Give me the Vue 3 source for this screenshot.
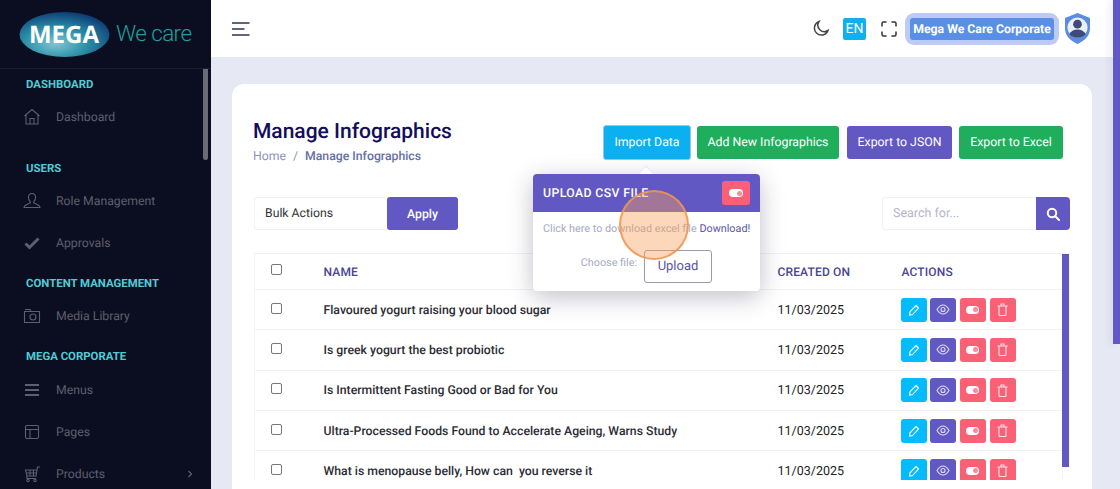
<script setup>
const nav = [
  { title: 'DASHBOARD', cls: 'sec-a', items: [{ t: 'Dashboard', i: 'home' }] },
  { title: 'USERS', cls: 'sec-b', items: [{ t: 'Role Management', i: 'user' }, { t: 'Approvals', i: 'check' }] },
  { title: 'CONTENT MANAGEMENT', cls: 'sec-b', items: [{ t: 'Media Library', i: 'camera' }] },
  { title: 'MEGA CORPORATE', cls: 'sec-b', items: [{ t: 'Menus', i: 'menu' }, { t: 'Pages', i: 'layout' }, { t: 'Products', i: 'cart', more: true }] }
]
const rows = [
  'Flavoured yogurt raising your blood sugar',
  'Is greek yogurt the best probiotic',
  'Is Intermittent Fasting Good or Bad for You',
  'Ultra-Processed Foods Found to Accelerate Ageing, Warns Study',
  'What is menopause belly, How can  you reverse it'
]
</script>

<template>
  <div class="app">
    <aside class="sidebar">
      <div class="logo">
        <svg width="92" height="48" viewBox="0 0 92 48">
          <defs>
            <radialGradient id="lg" cx="40%" cy="70%" r="70%">
              <stop offset="0" stop-color="#7cc9d2" />
              <stop offset=".5" stop-color="#2b8fa8" />
              <stop offset="1" stop-color="#0d4078" />
            </radialGradient>
          </defs>
          <ellipse cx="45.5" cy="22.500" rx="45" ry="22.500" fill="url(#lg)" />
          <text x="45" y="31" text-anchor="middle" class="mega">MEGA</text>
        </svg>
        <span class="wecare">We care</span>
      </div>
      <nav class="nav">
        <section v-for="s in nav" :key="s.title" :class="s.cls">
          <h4>{{ s.title }}</h4>
          <a v-for="it in s.items" :key="it.t" class="item">
            <svg class="ico" width="18" height="18" viewBox="0 0 18 18" fill="none" stroke="#5e5f6c" stroke-width="1.100">
              <template v-if="it.i === 'home'"><path d="M1.500 8 9 1.500 16.500 8M3 7v9h12V7M7 16v-5.500h4V16" /></template>
              <template v-else-if="it.i === 'user'"><path d="M9 1.500a3.600 3.600 0 0 1 3.600 3.700c0 2-1 3.500-1.800 4.500v1.300l4.700 2.300c1 .5 1.500 1.200 1.500 2.200H1c0-1 .5-1.700 1.500-2.200l4.700-2.300V9.700C6.400 8.700 5.400 7.200 5.400 5.200A3.600 3.600 0 0 1 9 1.500Z" /></template>
              <template v-else-if="it.i === 'check'"><path d="m2.500 9.500 4 4 9-9" stroke-width="3" /></template>
              <template v-else-if="it.i === 'camera'"><path d="M1.500 4.500h15v11h-15zM2 2.500h5l1 2" /><circle cx="10" cy="10" r="3" /></template>
              <template v-else-if="it.i === 'menu'"><path d="M2 4h14M2 9h14M2 14h14" stroke-width="1.800" /></template>
              <template v-else-if="it.i === 'layout'"><rect x="2.500" y="2.500" width="13" height="13" rx="1.500" /><path d="M2.500 6.500h13M7 6.500v9" /></template>
              <template v-else><path d="M17 2h-2.500L13 11H4L2.500 5H14" /><path d="M4 8h9.500M7 5v6M10.500 5v6M4 11v2.500h9" /><circle cx="5" cy="15.500" r="1.200" /><circle cx="12" cy="15.500" r="1.200" /></template>
            </svg>
            <span>{{ it.t }}</span>
            <svg v-if="it.more" class="chev" width="6" height="8" viewBox="0 0 6 8" fill="none" stroke="#5e5f6c" stroke-width="1.200"><path d="m1.500 1 3 3-3 3" /></svg>
          </a>
        </section>
      </nav>
      <div class="side-scroll"></div>
    </aside>

    <div class="main">
      <header class="topbar">
        <svg class="burger" width="18" height="14" viewBox="0 0 18 14" fill="none" stroke="#2b3350" stroke-width="1.700"><path d="M0 1h17.500M0 7h12.500M0 13h17.500" /></svg>
        <div class="top-right">
          <svg width="16" height="17" viewBox="0 0 16 17" fill="none" stroke="#444" stroke-width="1.500"><path d="M6 1.500a7 7 0 1 0 9 9A6.500 6.500 0 0 1 6 1.500Z" /></svg>
          <span class="lang">EN</span>
          <svg class="fs" width="16" height="16" viewBox="0 0 16 16" fill="none" stroke="#333" stroke-width="1.500" stroke-linecap="round"><path d="M1 5V2.500A1.500 1.500 0 0 1 2.500 1H5M11 1h2.500A1.500 1.500 0 0 1 15 2.500V5M15 11v2.500a1.500 1.500 0 0 1-1.500 1.500H11M5 15H2.500A1.500 1.500 0 0 1 1 13.500V11" /></svg>
          <div class="corp"><span>Mega We Care Corporate</span></div>
          <svg class="shield" width="25" height="31" viewBox="0 0 26 32">
            <path d="M13 0 26 5v11c0 8-6 13-13 16C6 29 0 24 0 16V5Z" fill="#5a8dde" />
            <circle cx="13" cy="15" r="10.500" fill="#e9eef9" />
            <circle cx="13" cy="11.500" r="4.500" fill="#3f4a7a" />
            <path d="M4.500 22c1.500-3.500 4.500-5 8.500-5s7 1.500 8.500 5c-2 2.500-5 3.500-8.500 3.500S6.500 24.500 4.500 22Z" fill="#3f4a7a" />
          </svg>
        </div>
      </header>

      <main class="content">
        <div class="card">
          <div class="head">
            <div>
              <h1>Manage Infographics</h1>
              <div class="crumb"><span class="home">Home</span><span class="sep">/</span><span class="cur">Manage Infographics</span></div>
            </div>
            <div class="head-btns">
              <button class="btn import">Import Data</button>
              <button class="btn green addnew">Add New Infographics</button>
              <button class="btn purple">Export to JSON</button>
              <button class="btn green excel">Export to Excel</button>
            </div>
          </div>

          <div class="tools">
            <div class="bulk">
              <span class="select">Bulk Actions</span>
              <button class="apply">Apply</button>
            </div>
            <div class="search">
              <span class="input">Search for...</span>
              <button class="sbtn">
                <svg width="14" height="14" viewBox="0 0 14 14" fill="none" stroke="#fff" stroke-width="2"><circle cx="6" cy="6" r="4.200" /><path d="m9.200 9.200 3.800 3.800" stroke-linecap="round" /></svg>
              </button>
            </div>
          </div>

          <div class="table-wrap">
            <table>
              <thead>
                <tr>
                  <th class="c1"><span class="cb"></span></th>
                  <th class="c2">NAME</th>
                  <th class="c3">CREATED ON</th>
                  <th class="c4">ACTIONS</th>
                </tr>
              </thead>
              <tbody>
                <tr v-for="r in rows" :key="r">
                  <td class="c1"><span class="cb"></span></td>
                  <td class="c2 name">{{ r }}</td>
                  <td class="c3 date">11/03/2025</td>
                  <td class="c4">
                    <div class="acts">
                      <span class="act blue"><svg width="12" height="12" viewBox="0 0 12 12" fill="none" stroke="#fff" stroke-width="1.100"><path d="M8 1.500 10.500 4 4.500 10.500 1.500 11 2 7.800Z" /></svg></span>
                      <span class="act violet"><svg width="14" height="11" viewBox="0 0 14 11" fill="none" stroke="#dcd9f5" stroke-width="1.100"><path d="M1 5.500C3 2 5 1 7 1s4 1 6 4.500C11 9 9 10 7 10S3 9 1 5.500Z" /><circle cx="7" cy="5.500" r="2" /></svg></span>
                      <span class="act red"><span class="toggle"></span></span>
                      <span class="act red trash"><svg width="11" height="13" viewBox="0 0 11 13" fill="none" stroke="#ffe3e8" stroke-width="1.100"><path d="M.5 3h10M4 3V1h3v2M2 3v8.500a1 1 0 0 0 1 1h5a1 1 0 0 0 1-1V3" /></svg></span>
                    </div>
                  </td>
                </tr>
              </tbody>
            </table>
            <div class="tbl-scroll"></div>
          </div>

          <div class="pop">
            <div class="arrow"></div>
            <div class="pop-head">
              <span>UPLOAD CSV FILE</span>
              <span class="pop-tog"><span class="toggle"></span></span>
            </div>
            <p class="pop-text">Click here to download excel file <b>Download!</b></p>
            <div class="pop-row"><span>Choose file:</span><button class="upload">Upload</button></div>
          </div>
          <div class="click"></div>
        </div>
      </main>
    </div>
    <div class="page-scroll"></div>
  </div>
</template>

<style>
html, body { margin: 0; overflow: hidden; }
</style>

<style scoped>
.app { position: relative; display: flex; width: 1120px; height: 489px; overflow: hidden; font-family: Roboto, "Liberation Sans", sans-serif; background: #e6e8f4; text-rendering: geometricPrecision; }
button { font-family: inherit; border: 0; color: #fff; padding: 0; text-rendering: geometricPrecision; }

.sidebar { position: relative; width: 211px; flex: none; background: #0b0e20; }
.logo { height: 69px; box-sizing: border-box; border-bottom: 1px solid #1b1e30; padding: 12px 0 0 19px; display: flex; align-items: flex-start; }
.mega { font: 700 24px "Open Sans", sans-serif; fill: #fff; }
.wecare { margin: 4px 0 0 5px; font: 300 22.500px/36px Roboto, sans-serif; color: #1c9f9c; letter-spacing: -.6px; white-space: nowrap; }
.nav { padding-left: 26px; }
h4 { margin: 0 0 4px; font: 700 11.400px/16px Roboto, sans-serif; color: #4fcdd6; }
.sec-a { padding-top: 7px; }
.sec-a h4 { margin-bottom: 3.500px; }
section + section { margin-top: 11px; }
.sec-a + section { margin-top: 22px; }
section:last-child h4 { margin-bottom: 5px; }
.item { display: flex; align-items: center; height: 42px; font-size: 12.250px; color: #5e5f6c; position: relative; }
.ico { width: 18px; height: 18px; margin-right: 12px; margin-left: -3px; flex: none; }
.item span { margin-left: 3px; }
.chev { position: absolute; left: 161px; top: 17px; }
.side-scroll { position: absolute; left: 203px; top: 69px; width: 5px; height: 91px; border-radius: 0 0 3px 3px; background: #6a6b76; }

.main { flex: 1; min-width: 0; display: flex; flex-direction: column; }
.topbar { height: 57px; flex: none; background: #fff; display: flex; align-items: center; justify-content: space-between; padding: 0 30px 0 21px; box-sizing: border-box; }
.top-right { display: flex; align-items: center; }
.lang { margin-left: 14px; width: 23px; height: 22px; border-radius: 2px; background: #0fb0ee; color: #fff; font: 400 14px/22px Roboto, sans-serif; text-align: center; }
.fs { margin-left: 15px; }
.corp { margin-left: 8px; padding: 5px; border-radius: 9px; background: #bccbf5; }
.corp span { display: block; width: 144px; height: 22px; text-align: center; border-radius: 3px; background: #5a8fe8; color: #fff; font: 700 12.250px/22px Roboto, sans-serif; white-space: nowrap; }
.shield { margin-left: 6px; }

.content { flex: 1; min-height: 0; padding: 27px 28px 0 21px; }
.card { position: relative; height: 460px; box-sizing: border-box; background: #fff; border-radius: 12px 12px 0 0; padding: 36px 22px 0 21px; overflow: hidden; }
.head { display: flex; justify-content: space-between; padding-right: 7px; }
h1 { margin: 0; font: 500 21px/24px Roboto, sans-serif; color: #120d5c; }
.crumb { margin-top: 4px; font-size: 12.250px; line-height: 16px; color: #8b93b8; }
.sep { margin: 0 7px; }
.cur { color: #6470a5; font-weight: 500; }
.head-btns { display: flex; align-items: flex-start; margin-top: 5px; }
.btn { width: 104px; height: 33px; margin-top: 1px; border-radius: 3px; padding: 1px 0 0; font: 400 12.300px Roboto, sans-serif; white-space: nowrap; }
.btn.green { background: #1fae5c; }
.btn.purple { width: 105px; background: #6258c4; margin-left: 8px; }
.btn.addnew { width: 142px; margin-left: 6px; }
.btn.excel { margin-left: 7px; }
.btn.import { width: 88px; background: #0bb0f0; height: 35px; margin-top: 0; box-sizing: border-box; border: 1px solid #9fc4e8; }

.tools { display: flex; justify-content: space-between; margin-top: 33px; margin-left: 1px; }
.bulk { display: flex; }
.select { width: 133px; height: 33px; box-sizing: border-box; border: 1px solid #f1f1f6; border-right: 0; border-radius: 3px 0 0 3px; padding-left: 10px; font-size: 12.250px; line-height: 31px; color: #333; }
.apply { width: 71px; height: 33px; background: #6258c4; border-radius: 3px; font-size: 12.250px; font-weight: 500; }
.search { display: flex; }
.input { width: 154px; height: 33px; box-sizing: border-box; border: 1px solid #f1f1f6; border-right: 0; border-radius: 3px 0 0 3px; padding-left: 10px; font-size: 12.500px; line-height: 31px; color: #b3b6cc; }
.sbtn { width: 34px; height: 33px; background: #6258c4; border-radius: 0 4px 4px 0; display: flex; align-items: center; justify-content: center; }

.table-wrap { position: relative; margin: 23px 0 0 1px; height: 227px; width: 816px; overflow: hidden; }
table { width: 809px; border-collapse: collapse; table-layout: fixed; border: 1px solid #f1f1f6; border-bottom: 0; font-size: 12.500px; color: #222; }
th { height: 36px; box-sizing: border-box; text-align: left; font-weight: 500; font-size: 12px; color: #4a4596; padding: 0; border-bottom: 1px solid #f1f1f6; letter-spacing: .15px; }
th.c4 { padding-left: 1px; }
td { height: 40.300px; box-sizing: border-box; padding: 0; border-bottom: 1px solid #f1f1f6; }
.c1 { width: 69px; padding-left: 16px; box-sizing: border-box; }
.c2 { width: 454px; }
.c3 { width: 123px; }
.date { padding-top: 1px; }
.name { font-weight: 500; font-size: 12.250px; white-space: pre; color: #2c2c34; }
.cb { display: block; width: 9px; height: 9px; border: 1px solid #777; border-radius: 2px; margin-bottom: 4px; }
td .cb { margin-bottom: 3px; }
.acts { display: flex; gap: 3px; }
.act { width: 26px; height: 24px; border-radius: 3px; display: flex; align-items: center; justify-content: center; }
.blue { background: #05bbff; }
.violet { background: #6258c4; }
.red { background: #fb6077; margin-left: 1px; }
.toggle { position: relative; display: block; width: 13px; height: 8px; border-radius: 4px; background: #fff; }
.toggle::after { content: ""; position: absolute; right: 1px; top: 1.500px; width: 5px; height: 5px; border-radius: 50%; background: #fb8a9b; }
.tbl-scroll { position: absolute; left: 808px; top: 1px; width: 7px; height: 213px; background: #6258c4; }

.pop { position: absolute; left: 301px; top: 90px; width: 227px; height: 117px; border-radius: 4px; background: #fff; box-shadow: 0 6px 24px rgba(30, 30, 60, .28); }
.arrow { position: absolute; left: 107px; top: -6px; width: 10px; height: 10px; background: #fff; transform: rotate(45deg); border: 1px solid #e6e6ee; }
.pop-head { position: relative; height: 38px; border-radius: 4px 4px 0 0; background: #6258c4; color: #fff; display: flex; align-items: center; justify-content: space-between; padding: 0 10px; font-size: 12.250px; font-weight: 500; letter-spacing: .4px; }
.pop-tog { width: 28px; height: 24px; border-radius: 3px; background: #fb6077; display: flex; align-items: center; justify-content: center; }
.pop-tog .toggle { width: 14px; height: 8px; }
.pop-text { margin: 10px 0 0 10px; font-size: 10.800px; line-height: 14px; color: #a5a9c6; white-space: nowrap; }
.pop-text b { font-weight: 400; color: #5b559f; }
.pop-row { display: flex; justify-content: flex-end; align-items: flex-start; margin: 14px 48px 0 0; font-size: 10.800px; color: #a5a9c6; }
.pop-row span { margin-top: 6px; }
.upload { margin-left: 7px; width: 68px; height: 33px; background: #fff; border: 1px solid #9a9ab0; border-radius: 3px; color: #5b559f; font-size: 13px; }
.click { position: absolute; left: 387px; top: 106px; width: 70px; height: 70px; box-sizing: border-box; border-radius: 50%; border: 2px solid rgba(240, 150, 80, .85); background: rgba(250, 160, 90, .42); }

.page-scroll { position: absolute; right: 0; top: 0; width: 7px; height: 344px; background: #6258c4; box-shadow: -4px 0 6px rgba(120, 125, 170, .12); }
</style>
